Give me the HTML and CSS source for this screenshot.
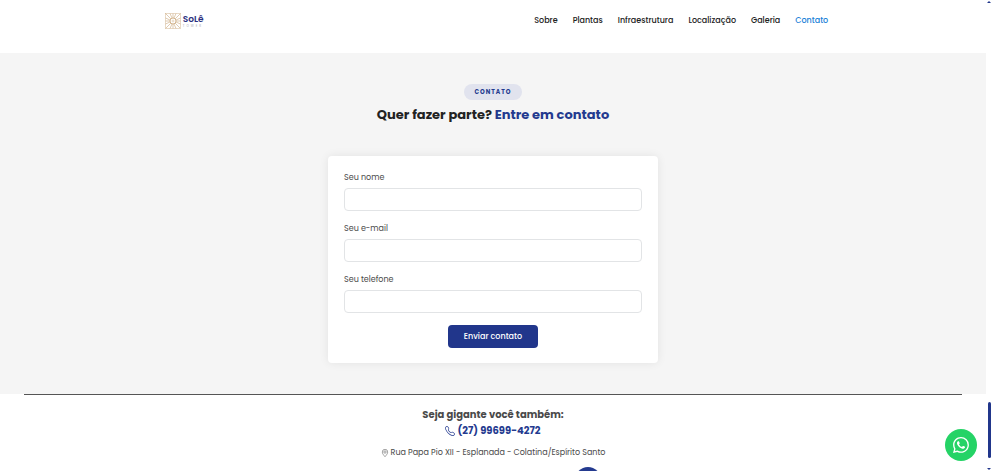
FILE: index.html
```html
<!DOCTYPE html>
<html lang="pt-br">
<head>
    <meta charset="UTF-8">
    <meta name="viewport" content="width=device-width, initial-scale=1.0">
    <title>SoLê Tower - Contato</title>
    <link rel="stylesheet" href="styles.css">
</head>
<body>
    <div class="page">
        <header class="header">
            <div class="container">
                <a href="#" class="logo">
                    <svg class="logo-mark" viewBox="0 0 32 32" fill="none" stroke="#d3b58f">
                        <rect x="1" y="1" width="30" height="30" stroke-width="1"/>
                        <path stroke-width="1.4" d="M16 1v9M16 22v9M1 16h9M22 16h9M1 1l11 11M20 20l11 11M31 1L20 12M12 20L1 31M10 1l4 9M22 1l-4 9M10 31l4-9M22 31l-4-9M1 10l9 4M1 22l9-4M31 10l-9 4M31 22l-9-4"/>
                        <circle cx="16" cy="16" r="6" fill="#fff" stroke-width="2"/>
                        <circle cx="16" cy="16" r="2"/>
                    </svg>
                    <span class="logo-text">
                        <strong>SoLê</strong>
                        <small>TOWER</small>
                    </span>
                </a>
                <nav class="nav">
                    <a href="#sobre">Sobre</a>
                    <a href="#plantas">Plantas</a>
                    <a href="#infraestrutura">Infraestrutura</a>
                    <a href="#localizacao">Localização</a>
                    <a href="#galeria">Galeria</a>
                    <a href="#contato" class="active">Contato</a>
                </nav>
            </div>
        </header>

        <section class="contact" id="contato">
            <span class="tag">CONTATO</span>
            <h2>Quer fazer parte? <span>Entre em contato</span></h2>
            <form class="contact-form">
                <label for="nome">Seu nome</label>
                <input type="text" id="nome">
                <label for="email">Seu e-mail</label>
                <input type="email" id="email">
                <label for="telefone">Seu telefone</label>
                <input type="tel" id="telefone">
                <button type="submit">Enviar contato</button>
            </form>
        </section>

        <footer class="footer">
            <h3>Seja gigante você também:</h3>
            <a href="tel:27996994272" class="phone">
                <svg viewBox="0 0 16 16" fill="currentColor">
                    <path d="M3.654 1.328a.678.678 0 0 0-1.015-.063L1.605 2.3c-.483.484-.661 1.169-.45 1.77a17.568 17.568 0 0 0 4.168 6.608 17.569 17.569 0 0 0 6.608 4.168c.601.211 1.286.033 1.77-.45l1.034-1.034a.678.678 0 0 0-.063-1.015l-2.307-1.794a.678.678 0 0 0-.58-.122l-2.19.547a1.745 1.745 0 0 1-1.657-.459L5.482 8.062a1.745 1.745 0 0 1-.46-1.657l.548-2.19a.678.678 0 0 0-.122-.58L3.654 1.328zM1.884.511a1.745 1.745 0 0 1 2.612.163L6.29 2.98c.329.423.445.974.315 1.494l-.547 2.19a.678.678 0 0 0 .178.643l2.457 2.457a.678.678 0 0 0 .644.178l2.189-.547a1.745 1.745 0 0 1 1.494.315l2.306 1.794c.829.645.905 1.87.163 2.611l-1.034 1.034c-.74.74-1.846 1.065-2.877.702a18.634 18.634 0 0 1-7.01-4.42 18.634 18.634 0 0 1-4.42-7.009c-.362-1.03-.037-2.137.703-2.877L1.885.511z"/>
                </svg>
                (27) 99699-4272
            </a>
            <p class="address">
                <svg viewBox="0 0 16 16" fill="none" stroke="currentColor">
                    <path d="M8 15.4C5 12 2.6 9 2.6 6a5.4 5.4 0 0 1 10.8 0c0 3-2.4 6-5.4 9.4z"/>
                    <circle cx="8" cy="6" r="2.4"/>
                </svg>
                Rua Papa Pio XII - Esplanada - Colatina/Espírito Santo
            </p>
            <div class="social">
                <a href="#" aria-label="Redes sociais"></a>
            </div>
        </footer>
    </div>

    <a href="#" class="whatsapp" aria-label="WhatsApp">
        <svg viewBox="0 0 16 16" fill="#fff">
            <path d="M13.601 2.326A7.854 7.854 0 0 0 7.994 0C3.627 0 .068 3.558.064 7.926c0 1.399.366 2.76 1.057 3.965L0 16l4.204-1.102a7.933 7.933 0 0 0 3.79.965h.004c4.368 0 7.926-3.558 7.93-7.93A7.898 7.898 0 0 0 13.6 2.326zM7.994 14.521a6.573 6.573 0 0 1-3.356-.92l-.24-.144-2.494.654.666-2.433-.156-.251a6.56 6.56 0 0 1-1.007-3.505c0-3.626 2.957-6.584 6.591-6.584a6.56 6.56 0 0 1 4.66 1.931 6.557 6.557 0 0 1 1.928 4.66c-.004 3.639-2.961 6.592-6.592 6.592zm3.615-4.934c-.197-.099-1.17-.578-1.353-.646-.182-.065-.315-.099-.445.099-.133.197-.513.646-.627.775-.114.133-.232.148-.43.05-.197-.1-.836-.308-1.592-.985-.59-.525-.985-1.175-1.103-1.372-.114-.198-.011-.304.088-.403.087-.088.197-.232.296-.346.1-.114.133-.198.198-.33.065-.134.034-.248-.015-.347-.05-.099-.445-1.076-.612-1.47-.16-.389-.323-.335-.445-.34-.114-.007-.247-.007-.38-.007a.729.729 0 0 0-.529.247c-.182.198-.691.677-.691 1.654 0 .977.71 1.916.81 2.049.098.133 1.394 2.132 3.383 2.992.47.205.84.326 1.129.418.475.152.904.129 1.246.08.38-.058 1.171-.48 1.338-.943.164-.464.164-.86.114-.943-.049-.084-.182-.133-.38-.232z"/>
        </svg>
    </a>

    <div class="scrollbar">
        <span class="arrow-up"></span>
        <span class="thumb"></span>
        <span class="arrow-down"></span>
    </div>
</body>
</html>
```

FILE: styles.css
```css
* {
    box-sizing: border-box;
}
body {
    margin: 0;
    height: 100vh;
    overflow: hidden;
    display: flex;
    font-family: Poppins, Inter, sans-serif;
    font-size: 8px;
    color: #4a4a4a;
    background-color: #fff;
}
a {
    text-decoration: none;
}
.page {
    flex: 1;
}

/* header */
.header {
    height: 53px;
}
.container {
    display: flex;
    justify-content: space-between;
    width: 68%;
    height: 41px;
    margin: 0 auto;
    align-items: center;
}
.logo {
    display: flex;
    align-items: center;
    gap: 2px;
    color: #2b3080;
    padding-left: 7px;
}
.logo-mark {
    width: 16px;
    height: 16px;
}
.logo-text {
    display: flex;
    flex-direction: column;
}
.logo-text strong {
    font-size: 9px;
    font-weight: 600;
    line-height: 10px;
}
.logo-text small {
    font-size: 3px;
    line-height: 4px;
    letter-spacing: 2px;
    color: #a9a9b4;
}
.nav {
    display: flex;
    gap: 15px;
}
.nav a {
    font-weight: 500;
    color: #222;
}
.nav a.active {
    color: #1a7fd8;
}

/* contact */
.contact {
    display: flex;
    flex-direction: column;
    align-items: center;
    background-color: #f5f5f5;
    padding: 31px 16px;
}
.tag {
    padding: 0 10px;
    border-radius: 8px;
    background-color: #e1e3ee;
    color: #243a8f;
    font-size: 6px;
    line-height: 16px;
    font-weight: 700;
    letter-spacing: 1px;
}
.contact h2 {
    margin: 5px 0 31px;
    font-size: 13px;
    line-height: 20px;
    font-weight: 700;
    color: #222;
}
.contact h2 span {
    color: #243a8f;
}
.contact-form {
    display: flex;
    flex-direction: column;
    width: 100%;
    max-width: 330px;
    padding: 16px 16px 15px;
    border-radius: 4px;
    background-color: #fff;
    box-shadow: 0 0 10px rgba(0, 0, 0, 0.08);
}
.contact-form label {
    line-height: 12px;
    margin-bottom: 4px;
}
.contact-form input {
    height: 23px;
    margin-bottom: 12px;
    padding: 0 8px;
    border: 1px solid #e2e4e6;
    border-radius: 4px;
    font: inherit;
}
.contact-form button {
    align-self: center;
    height: 23px;
    padding: 0 16px;
    border: none;
    border-radius: 4px;
    background-color: #21368b;
    color: #fff;
    font-family: inherit;
    font-size: 8px;
    font-weight: 500;
}

/* footer */
.footer {
    display: flex;
    flex-direction: column;
    align-items: center;
    margin: 0 24px;
    padding-top: 12px;
    border-top: 1px solid #555;
}
.footer h3 {
    margin: 0;
    font-size: 10px;
    line-height: 16px;
    font-weight: 700;
}
.phone {
    display: flex;
    align-items: center;
    gap: 2px;
    font-size: 10px;
    line-height: 16px;
    font-weight: 700;
    color: #243a8f;
}
.phone svg {
    width: 10px;
    height: 10px;
}
.address {
    display: flex;
    align-items: center;
    gap: 2px;
    margin: 8px 0;
    line-height: 12px;
}
.address svg {
    width: 8px;
    height: 8px;
}
.social {
    padding-left: 190px;
}
.social a {
    display: block;
    width: 26px;
    height: 26px;
    border-radius: 50%;
    background-color: #243a8f;
}

/* floating button */
.whatsapp {
    position: fixed;
    right: 15px;
    bottom: 10px;
    display: flex;
    align-items: center;
    justify-content: center;
    width: 32px;
    height: 32px;
    border-radius: 50%;
    background-color: #25d366;
}
.whatsapp svg {
    width: 16px;
    height: 16px;
}

/* scrollbar */
.scrollbar {
    display: flex;
    flex-direction: column;
    align-items: flex-end;
    width: 6px;
    padding: 1px 1px 1px 0;
}
.scrollbar .thumb {
    width: 3px;
    height: 56px;
    margin: auto 0 10px;
    border-radius: 2px;
    background-color: #21368b;
}
.arrow-up,
.arrow-down {
    border: 2px solid transparent;
}
.arrow-up {
    border-top: none;
    border-bottom-color: #21368b;
}
.arrow-down {
    border-bottom: none;
    border-top-color: #21368b;
}
```
